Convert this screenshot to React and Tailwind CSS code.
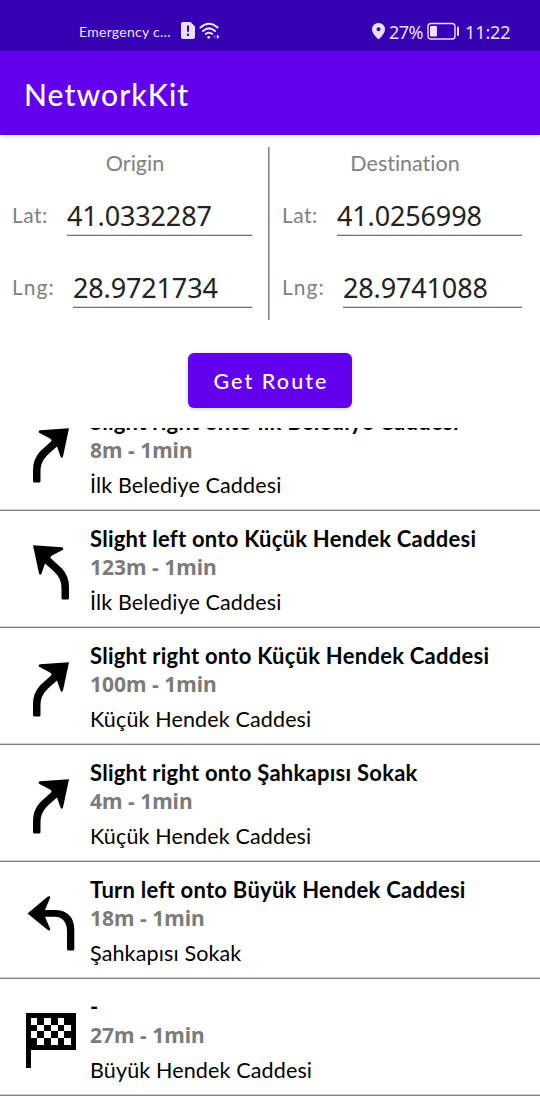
import React from "react";

function SlightRight({ flip }) {
  return (
    <svg width="36" height="55" viewBox="0 0 36 55" className={flip ? "-scale-x-100" : ""}>
      <path d="M36 .3 L30 28.500 Q28.800 31 27.500 28.500 L24 18.500 Q18 23.500 14 27.500 Q7.500 34 7.500 43 V53 Q7.500 54.500 6 54.500 H1.500 Q0 54.500 0 53 V42 Q0 31 7 23.500 Q12 19 18.500 13 Q19 11.500 17 10.500 L6.500 5 Q4.500 3.200 7 2.200 Z" />
    </svg>
  );
}

function TurnLeft() {
  return (
    <svg width="48" height="55" viewBox="0 0 48 55">
      <path d="M.5 17.500 L20.500 .8 Q24 -.8 23 2 L18 14 H29 Q46.500 15 47.300 33 V53 Q47.300 54.500 46 54.500 H41.500 Q40 54.500 40 53 V35 Q39.500 22 29 20.800 H18 L23 32.500 Q24 35.500 20.500 33.800 Z" />
    </svg>
  );
}

function Flag() {
  return (
    <svg width="50" height="55" viewBox="0 0 50 55" shapeRendering="crispEdges">
      <path d="M0 0H50V36.500H5V54.500H0Z" />
      <path
        fill="#fff"
        d="M4.500 5h6.800v6.500h-6.800zM18 5h6.800v6.500h-6.800zM31.600 5h6.800v6.500h-6.800zM11.300 11.500h6.800v6.800h-6.800zM24.800 11.500h6.800v6.800h-6.800zM38.400 11.500h6.800v6.800h-6.800zM4.500 18.300h6.800v6.700h-6.800zM18 18.300h6.800v6.700h-6.800zM31.600 18.300h6.800v6.700h-6.800zM11.300 25h6.800v6.500h-6.800zM24.800 25h6.800v6.500h-6.800zM38.400 25h6.800v6.500h-6.800z"
      />
    </svg>
  );
}

const icons = {
  right: <SlightRight />,
  left: <SlightRight flip />,
  turn: <TurnLeft />,
  flag: <Flag />,
};

const steps = [
  { icon: "right", title: "Slight right onto İlk Belediye Caddesi", info: "8m - 1min", road: "İlk Belediye Caddesi" },
  { icon: "left", title: "Slight left onto Küçük Hendek Caddesi", info: "123m - 1min", road: "İlk Belediye Caddesi" },
  { icon: "right", title: "Slight right onto Küçük Hendek Caddesi", info: "100m - 1min", road: "Küçük Hendek Caddesi" },
  { icon: "right", title: "Slight right onto Şahkapısı Sokak", info: "4m - 1min", road: "Küçük Hendek Caddesi" },
  { icon: "turn", title: "Turn left onto Büyük Hendek Caddesi", info: "18m - 1min", road: "Şahkapısı Sokak" },
  { icon: "flag", title: "-", info: "27m - 1min", road: "Büyük Hendek Caddesi" },
];

function Step({ step }) {
  return (
    <li className="flex h-[117px] shrink-0 border-b border-[#808080] bg-white shadow-[inset_0_-1px_0_#d0d0d0]">
      <div className="flex w-[90px] shrink-0 justify-center pt-[34px] pl-3">
        {icons[step.icon]}
      </div>
      <div className="pt-[13px] whitespace-nowrap text-black">
        <div className="h-[29px] text-[22px] leading-[30px] font-bold tracking-[0.26px]">{step.title}</div>
        <div className="h-[29px] font-['Noto_Sans',sans-serif] text-[21px] leading-7 font-bold text-[#7b7b7b]">{step.info}</div>
        <div className="pt-[6px] text-[21.5px] leading-7 tracking-[0.14px]">{step.road}</div>
      </div>
    </li>
  );
}

function Field({ label, value, wide }) {
  return (
    <label className="flex h-[72px] items-start text-[21px] text-[#808080]">
      <span className={`${wide ? "w-[61px] tracking-[1px]" : "w-[55px] tracking-[0.5px]"} shrink-0 pt-[16px] leading-7`}>{label}</span>
      <span className="mt-[8px] h-[43px] flex-1 border-b border-[#6f6f6f] pt-[5px] font-['Noto_Sans',sans-serif] text-[27px] leading-9 tracking-[-0.15px] text-[#222] shadow-[inset_0_-1px_0_#dadada]">
        {value}
      </span>
    </label>
  );
}

function Place({ title, lat, lng }) {
  return (
    <section className="flex w-[270px] flex-col pr-[18px] pl-3">
      <h2 className="pt-[2px] pb-[10px] pl-[6px] text-center text-[21.5px] leading-7 text-[#808080]">{title}</h2>
      <div className="-mt-[2px]">
        <Field label="Lat:" value={lat} />
        <Field label="Lng:" value={lng} wide />
      </div>
    </section>
  );
}

export default function App() {
  return (
    <main className="flex h-[1096px] w-[540px] flex-col overflow-hidden bg-white font-[Lato,sans-serif] [font-variant-ligatures:none]">
      <div className="flex h-[51px] shrink-0 items-start bg-[#3700b3] pt-[20px] pr-[29px] pl-[79px] text-[#e9e0fa]">
        <span className="w-[102px] text-[14px] leading-6 tracking-[0.28px]">Emergency c…</span>
        <svg width="14" height="17" viewBox="0 0 14 17" className="mt-[2px]" fill="currentColor">
          <path fillRule="evenodd" d="M2 0H9.500L14 4.500V15Q14 17 12 17H2Q0 17 0 15V2Q0 0 2 0ZM6 3.500V9.800H8V3.500ZM7 11.500A1.300 1.300 0 1 0 7 14.100A1.300 1.300 0 1 0 7 11.500Z" />
        </svg>
        <svg width="22" height="18" viewBox="0 0 22 18" className="mt-[2px] ml-[4px]" fill="none" stroke="currentColor" strokeWidth="2" strokeLinecap="round">
          <path d="M1.500 5.500Q10 -2 18.500 5.500M4 9Q10 3.800 16 9M6.700 12Q10 9.500 13.200 12" />
          <circle cx="9.700" cy="15.300" r="1.400" fill="currentColor" stroke="none" />
          <path d="M17.800 12.500L20.500 14.800L17.800 17Z" fill="currentColor" stroke="none" />
          <path d="M16.500 12.500L14 14.800L16.500 17Z" fill="#7654c5" stroke="none" />
        </svg>
        <svg width="13" height="17" viewBox="0 0 13 17" className="mt-[3px] ml-auto" fill="currentColor">
          <path fillRule="evenodd" d="M6.500 0A6.400 6.400 0 0 1 13 6.500Q13 10.500 6.500 16.500Q0 10.500 0 6.500A6.400 6.400 0 0 1 6.500 0ZM6.500 4.200A2 2 0 1 0 6.500 8.200A2 2 0 1 0 6.500 4.200Z" />
        </svg>
        <span className="ml-[4px] w-[38px] font-['Noto_Sans',sans-serif] text-[18px] leading-6 tracking-[-0.5px]">27%</span>
        <svg width="33" height="18" viewBox="0 0 33 18" className="mt-[2px]" fill="none" stroke="currentColor">
          <rect x="1" y="1.500" width="27" height="15.500" rx="3" strokeWidth="1.400" />
          <rect x="3" y="4" width="7" height="10.500" rx="1" fill="currentColor" stroke="none" />
          <path d="M31 5.500V13" strokeWidth="2" strokeLinecap="round" />
        </svg>
        <span className="ml-[5px] w-[46px] font-['Noto_Sans',sans-serif] text-[18px] leading-6 tracking-[-0.1px]">11:22</span>
      </div>
      <header className="z-10 flex h-[84px] shrink-0 items-center bg-[#6200ee] pt-[3px] pl-6 text-[30px] font-medium tracking-[1.1px] text-white shadow-[0_3px_3px_-1px_rgba(0,0,0,0.14)]">
        NetworkKit
      </header>
      <div className="mt-3 flex h-[174px] shrink-0">
        <Place title="Origin" lat="41.0332287" lng="28.9721734" />
        <div className="-ml-[2px] h-[173px] w-[2px] border-r border-l border-r-[#b8b8b8] border-l-[#808080]" />
        <Place title="Destination" lat="41.0256998" lng="28.9741088" />
      </div>
      <div className="flex h-[107px] shrink-0 justify-center pt-8">
        <button className="h-[55px] w-[164px] rounded-[6px] bg-[#6200ee] pt-[2px] pl-[2px] text-[21.5px] font-medium tracking-[2.1px] text-white shadow-[0_1px_4px_rgba(0,0,0,0.2)]">
          Get Route
        </button>
      </div>
      <div className="min-h-0 flex-1 overflow-hidden">
        <ul className="-mt-[34px] flex flex-col">
          {steps.map((step, index) => (
            <Step key={index} step={step} />
          ))}
        </ul>
      </div>
    </main>
  );
}
